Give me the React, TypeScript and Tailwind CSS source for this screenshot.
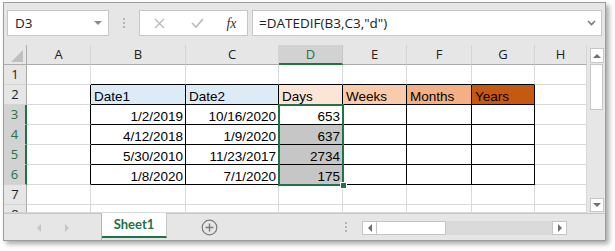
import React from 'react';

// column widths in px, row header first
const COLS = [
  { k: 'A', w: 64 },
  { k: 'B', w: 95 },
  { k: 'C', w: 93 },
  { k: 'D', w: 64 },
  { k: 'E', w: 64 },
  { k: 'F', w: 65 },
  { k: 'G', w: 63 },
  { k: 'H', w: 52 },
];

type Cell = { t?: string; right?: boolean; bg?: string };

const HEAD: Record<string, Cell> = {
  B: { t: 'Date1', bg: 'bg-[#ddebf7]' },
  C: { t: 'Date2', bg: 'bg-[#ddebf7]' },
  D: { t: 'Days', bg: 'bg-[#fce4d6]' },
  E: { t: 'Weeks', bg: 'bg-[#f8cbad]' },
  F: { t: 'Months', bg: 'bg-[#f4b084]' },
  G: { t: 'Years', bg: 'bg-[#c65911]' },
};

const DATA = [
  ['1/2/2019', '10/16/2020', '653'],
  ['4/12/2018', '1/9/2020', '637'],
  ['5/30/2010', '11/23/2017', '2734'],
  ['1/8/2020', '7/1/2020', '175'],
];

function cellFor(r: number, c: number): Cell {
  const key = COLS[c].k;
  if (r === 2) return HEAD[key] || {};
  if (r >= 3 && r <= 6) {
    const row = DATA[r - 3];
    if (key === 'B') return { t: row[0], right: true };
    if (key === 'C') return { t: row[1], right: true };
    if (key === 'D') return { t: row[2], right: true, bg: r > 3 ? 'bg-[#c6c6c6]' : undefined };
  }
  return {};
}

function Tri({ dir, color = '#7a7a7a', size = 4 }: { dir: 'up' | 'down' | 'left' | 'right'; color?: string; size?: number }) {
  const s = size;
  const pts = {
    up: `0,${s} ${s},0 ${2 * s},${s}`,
    down: `0,0 ${2 * s},0 ${s},${s}`,
    left: `${s},0 ${s},${2 * s} 0,${s}`,
    right: `0,0 0,${2 * s} ${s},${s}`,
  }[dir];
  const w = dir === 'up' || dir === 'down' ? 2 * s : s;
  const h = dir === 'up' || dir === 'down' ? s : 2 * s;
  return (
    <svg width={w} height={h} viewBox={`0 0 ${w} ${h}`}>
      <polygon points={pts} fill={color} />
    </svg>
  );
}

function Dots() {
  return (
    <div className="flex flex-col gap-[2px]">
      <div className="w-[2px] h-[2px] bg-[#b4b4b4]" />
      <div className="w-[2px] h-[2px] bg-[#b4b4b4]" />
      <div className="w-[2px] h-[2px] bg-[#b4b4b4]" />
    </div>
  );
}

function GridRow({ r, h }: { r: number; h: number }) {
  const selRow = r >= 3 && r <= 6;
  return (
    <div className="flex overflow-hidden" style={{ height: h }}>
      <div
        className={`w-[23px] shrink-0 overflow-hidden border-b border-[#d4d4d4] ${
          selRow ? 'bg-[#d2d2d2] text-[#217346] border-r-2 border-r-[#217346]' : 'border-r border-r-[#ababab] text-[#222]'
        } text-[13px] leading-none`}
        style={{ fontFamily: '"Open Sans", sans-serif' }}
      >
        <div className="h-[19px] flex items-center justify-center">{r}</div>
      </div>
      {COLS.map((col, c) => {
        const cell = cellFor(r, c);
        const inTable = r >= 2 && r <= 6 && c >= 1 && c <= 6;
        const blackRight = inTable || (c === 0 && r >= 2 && r <= 6);
        const blackBottom = inTable || (r === 1 && c >= 1 && c <= 6);
        return (
          <div
            key={col.k}
            className={`shrink-0 flex items-end overflow-hidden border-r border-b ${blackRight ? 'border-r-black' : 'border-r-[#d9d9d9]'} ${
              blackBottom ? 'border-b-black' : 'border-b-[#d9d9d9]'
            } ${cell.bg || 'bg-white'} ${cell.right ? 'justify-end pr-[2px]' : 'pl-[3px]'}`}
            style={{ width: col.w }}
          >
            {cell.t && (
              <span className="text-[13.5px] leading-[15px] text-black" style={{ fontFamily: '"Liberation Sans", Arial, sans-serif' }}>
                {cell.t}
              </span>
            )}
          </div>
        );
      })}
    </div>
  );
}

export default function App() {
  return (
    <div className="w-[615px] h-[251px] bg-white pt-[2px] pl-[3px]" style={{ fontFamily: '"Open Sans", sans-serif' }}>
      <div className="w-[603px] h-[239px] border border-[#9d9d9d] bg-[#e6e6e6] shadow-[3px_3px_5px_rgba(0,0,0,0.35)] flex flex-col overflow-hidden">
        {/* Formula bar */}
        <div className="h-[42px] shrink-0 flex items-start pt-[7px] pl-[3px]">
          <div className="w-[102px] h-[26px] bg-white border border-[#c6c6c6] flex items-center justify-between pl-[7px] pr-[6px]">
            <span className="text-[13.5px] text-[#222]">D3</span>
            <Tri dir="down" color="#8a8a8a" size={4} />
          </div>
          <div className="w-[30px] h-[26px] flex items-center justify-center">
            <Dots />
          </div>
          <div className="w-[109px] h-[26px] bg-white border border-[#c6c6c6] flex items-center">
            <div className="w-[38px] flex justify-center">
              <svg width="11" height="11" viewBox="0 0 11 11">
                <path d="M1 1 L10 10 M10 1 L1 10" stroke="#b9b9b9" strokeWidth="1.3" />
              </svg>
            </div>
            <div className="w-[38px] flex justify-center">
              <svg width="13" height="10" viewBox="0 0 13 10">
                <path d="M1 5 L5 9 L12 1" stroke="#b9b9b9" strokeWidth="1.6" fill="none" />
              </svg>
            </div>
            <div className="flex-1 flex justify-center">
              <span className="italic text-[14px] text-[#333]" style={{ fontFamily: '"Liberation Serif", serif' }}>
                fx
              </span>
            </div>
          </div>
          <div className="ml-[4px] w-[350px] h-[26px] bg-white border border-[#c6c6c6] flex items-center justify-between pl-[6px] pr-[5px]">
            <span className="text-[13.5px] text-[#222]">=DATEDIF(B3,C3,"d")</span>
            <svg width="9" height="6" viewBox="0 0 9 6">
              <path d="M1 1 L4.5 4.5 L8 1" stroke="#7a7a7a" strokeWidth="1.6" fill="none" />
            </svg>
          </div>
        </div>

        {/* Grid */}
        <div className="h-[168px] shrink-0 flex">
          <div className="w-[583px] shrink-0 relative overflow-hidden">
            {/* column headers */}
            <div className="flex h-[20px]">
              <div className="w-[23px] shrink-0 border-r border-b border-[#ababab] flex items-end justify-end pr-[3px] pb-[2px]">
                <svg width="12" height="12" viewBox="0 0 12 12">
                  <polygon points="12,0 12,12 0,12" fill="#bfbfbf" />
                </svg>
              </div>
              {COLS.map((col) => (
                <div
                  key={col.k}
                  className={`shrink-0 flex items-center justify-center text-[13px] leading-none border-r ${
                    col.k === 'D'
                      ? 'bg-[#d2d2d2] text-[#217346] border-r-[#c6c6c6] border-b-2 border-b-[#217346]'
                      : 'text-[#222] border-r-[#d4d4d4] border-b border-b-[#ababab]'
                  }`}
                  style={{ width: col.w }}
                >
                  {col.k}
                </div>
              ))}
            </div>
            {[1, 2, 3, 4, 5, 6, 7].map((r) => (
              <GridRow key={r} r={r} h={20} />
            ))}
            <GridRow r={8} h={8} />

            {/* selection D3:D6 */}
            <div className="absolute left-[274px] top-[59px] w-[66px] h-[82px] border-2 border-[#217346] pointer-events-none" />
            <div className="absolute left-[336px] top-[137px] w-[7px] h-[7px] bg-[#217346] border border-white" />
          </div>

          {/* vertical scrollbar */}
          <div className="flex-1 flex flex-col items-start pl-[3px] pt-[3px] pb-[1px]">
            <div className="w-[14px] h-[15px] bg-white border border-[#c6c6c6] flex items-center justify-center">
              <Tri dir="up" color="#707070" size={4} />
            </div>
            <div className="w-[13px] h-[46px] bg-white border border-[#c6c6c6] mt-[1px]" />
            <div className="flex-1" />
            <div className="w-[14px] h-[14px] bg-white border border-[#c6c6c6] flex items-center justify-center">
              <Tri dir="down" color="#707070" size={4} />
            </div>
          </div>
        </div>

        {/* Sheet tabs */}
        <div className="flex-1 flex border-t border-[#c6c6c6]">
          <div className="w-[98px] shrink-0 border-r border-[#b4b4b4] flex items-center justify-center gap-[24px] pt-[1px]">
            <Tri dir="left" color="#c4c4c4" size={4} />
            <Tri dir="right" color="#c4c4c4" size={4} />
          </div>
          <div className="w-[65px] shrink-0 -mt-px bg-white border-r border-[#c6c6c6] border-b-2 border-b-[#217346] mb-[2px] flex items-center justify-center">
            <span className="text-[13px] font-bold text-[#217346]" style={{ fontFamily: 'Lato, sans-serif' }}>
              Sheet1
            </span>
          </div>
          <div className="w-[84px] shrink-0 flex items-center justify-center">
            <svg width="17" height="17" viewBox="0 0 17 17">
              <circle cx="8.5" cy="8.5" r="7.3" stroke="#7a7a7a" strokeWidth="1.2" fill="none" />
              <path d="M8.5 4.5 V12.5 M4.5 8.5 H12.5" stroke="#7a7a7a" strokeWidth="1.4" />
            </svg>
          </div>
          <div className="w-[111px] shrink-0 flex items-center justify-end pr-[15px]">
            <Dots />
          </div>
          <div className="w-[205px] h-[14px] mt-[7px] flex">
            <div className="w-[15px] bg-white border border-[#c6c6c6] flex items-center justify-center">
              <Tri dir="left" color="#707070" size={4} />
            </div>
            <div className="w-[70px] bg-white border border-[#c6c6c6] -ml-px" />
            <div className="flex-1 bg-[#dadada]" />
            <div className="w-[15px] bg-white border border-[#c6c6c6] flex items-center justify-center">
              <Tri dir="right" color="#707070" size={4} />
            </div>
          </div>
        </div>
      </div>
    </div>
  );
}
